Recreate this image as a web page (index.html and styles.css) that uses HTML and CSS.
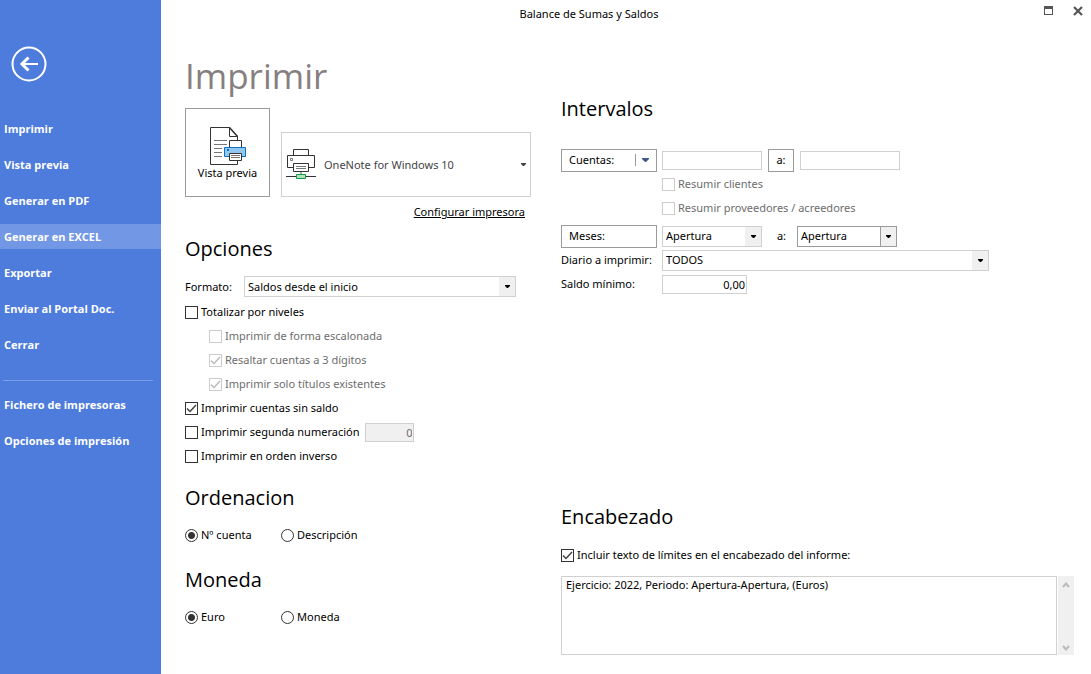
FILE: index.html
```html
<!DOCTYPE html>
<html lang="es">
<head>
<meta charset="utf-8">
<title>Balance de Sumas y Saldos</title>
<link rel="stylesheet" href="styles.css">
</head>
<body>
<div class="app">
  <aside class="sidebar">
    <button class="back" type="button" aria-label="Volver">
      <svg width="36" height="36" viewBox="0 0 36 36" fill="none" stroke="#fff"><circle cx="18" cy="18" r="16.500" stroke-width="2"/><path d="M27 18H11" stroke-width="2"/><path d="M17.500 11.500L11 18l6.500 6.500" stroke-width="3"/></svg>
    </button>
    <nav>
      <ul class="menu">
        <li><a href="#imprimir">Imprimir</a></li>
        <li><a href="#vista">Vista previa</a></li>
        <li><a href="#pdf">Generar en PDF</a></li>
        <li><a class="active" href="#excel">Generar en EXCEL</a></li>
        <li><a href="#exportar">Exportar</a></li>
        <li><a href="#portal">Enviar al Portal Doc.</a></li>
        <li><a href="#cerrar">Cerrar</a></li>
      </ul>
      <ul class="menu secondary">
        <li><a href="#fichero">Fichero de impresoras</a></li>
        <li><a href="#opciones">Opciones de impresión</a></li>
      </ul>
    </nav>
  </aside>

  <div class="window">
    <header class="titlebar">
      <span class="title">Balance de Sumas y Saldos</span>
      <div class="controls">
        <button type="button" aria-label="Maximizar"><svg width="9" height="9" viewBox="0 0 9 9" shape-rendering="crispEdges"><path d="M0 0h9v9H0zM1 3v5h7V3z" fill="#555" fill-rule="evenodd"/></svg></button>
        <button type="button" aria-label="Cerrar ventana"><svg width="10" height="10" viewBox="0 0 10 10"><path d="M1 1l8 8M9 1L1 9" stroke="#555" stroke-width="2.200"/></svg></button>
      </div>
    </header>

    <main class="content">
      <div class="left">
        <h1>Imprimir</h1>
        <div class="print-row">
          <button class="preview" type="button">
            <svg width="36" height="38" viewBox="0 0 36 38" fill="none">
              <path d="M27.500 9.500V37.500H.5V.5H19.500L27.500 9.500H19.500V.5" fill="#fff" stroke="#333"/>
              <path d="M19.500.5l8 9" stroke="#333" stroke-width="1.500"/>
              <path d="M4 13.500h13M4 17.500h13M4 21.500h8M4 25.500h8M4 29.500h8" stroke="#777"/>
              <path d="M19.500 20v-6.500h12V20" fill="#fff" stroke="#333"/>
              <path d="M14.500 20.500h21v9h-21z" fill="#91c8f0" stroke="#0f6fc0"/>
              <path d="M17 22h2v2h-2z" fill="#0f6fc0"/>
              <path d="M19.500 26.500h12v7h-12z" fill="#fff" stroke="#333"/>
              <path d="M21 28.500h9M21 30.500h9" stroke="#777"/>
            </svg>
            <span>Vista previa</span>
          </button>
          <div class="select printer">
            <svg class="printer-icon" width="30" height="31" viewBox="0 0 30 31" fill="none">
              <path d="M7.500 7V.5h15V7" stroke="#333"/>
              <path d="M7.500 18.500h-6v-12h27v12h-6" stroke="#333"/>
              <path d="M4.500 9.500h2v2h-2z" stroke="#777"/>
              <path d="M7.500 14.500h15v8h-15z" fill="#fff" stroke="#333"/>
              <path d="M10 17.500h10M10 19.500h10" stroke="#777"/>
              <path d="M15 23v3" stroke="#aaa" stroke-width="2"/>
              <path d="M0 27.500h30" stroke="#333"/>
              <path d="M10.500 25.500h9v4h-9z" fill="#b3dfb9" stroke="#109a45"/>
            </svg>
            <select aria-label="Impresora"><option>OneNote for Windows 10</option></select>
            <svg class="arrow" width="5" height="3" viewBox="0 0 5 3"><path d="M0 0h5v1L3 3H2L0 1z"/></svg>
          </div>
        </div>
        <a class="configure" href="#configurar">Configurar impresora</a>

        <section>
          <h2>Opciones</h2>
          <div class="format">
            <label for="formato">Formato:</label>
            <div class="select">
              <select id="formato"><option>Saldos desde el inicio</option></select>
              <span class="drop"><svg width="5" height="3" viewBox="0 0 5 3"><path d="M0 0h5v1L3 3H2L0 1z"/></svg></span>
            </div>
          </div>
          <div class="checks">
            <label class="check"><input type="checkbox">Totalizar por niveles</label>
            <label class="check nested"><input type="checkbox" disabled>Imprimir de forma escalonada</label>
            <label class="check nested"><input type="checkbox" checked disabled>Resaltar cuentas a 3 dígitos</label>
            <label class="check nested"><input type="checkbox" checked disabled>Imprimir solo títulos existentes</label>
            <label class="check"><input type="checkbox" checked>Imprimir cuentas sin saldo</label>
            <div class="with-field">
              <label class="check"><input type="checkbox">Imprimir segunda numeración</label>
              <input class="field number" type="text" value="0" aria-label="Número de numeración" disabled>
            </div>
            <label class="check"><input type="checkbox">Imprimir en orden inverso</label>
          </div>
        </section>

        <section>
          <h2>Ordenacion</h2>
          <div class="radios">
            <label class="check"><input type="radio" name="orden" checked>Nº cuenta</label>
            <label class="check"><input type="radio" name="orden">Descripción</label>
          </div>
        </section>

        <section>
          <h2>Moneda</h2>
          <div class="radios">
            <label class="check"><input type="radio" name="moneda" checked>Euro</label>
            <label class="check"><input type="radio" name="moneda">Moneda</label>
          </div>
        </section>
      </div>

      <div class="right">
        <section>
          <h2>Intervalos</h2>
          <div class="ranges">
            <button class="box split" type="button"><span>Cuentas:</span><span class="split-arrow"><svg width="7" height="4" viewBox="0 0 7 4"><path d="M0 0h7v1L4 4H3L0 1z" fill="#3f5a86"/></svg></span></button>
            <div class="pair">
              <input class="field" type="text" aria-label="Cuenta inicial">
              <button class="box to" type="button">a:</button>
              <input class="field" type="text" aria-label="Cuenta final">
            </div>
            <label class="check offset"><input type="checkbox" disabled>Resumir clientes</label>
            <label class="check offset"><input type="checkbox" disabled>Resumir proveedores / acreedores</label>
          </div>
          <div class="ranges">
            <button class="box" type="button">Meses:</button>
            <div class="months">
              <div class="select">
                <select aria-label="Mes inicial"><option>Apertura</option></select>
                <span class="drop"><svg width="5" height="3" viewBox="0 0 5 3"><path d="M0 0h5v1L3 3H2L0 1z"/></svg></span>
              </div>
              <span class="to-text">a:</span>
              <div class="select focused">
                <select aria-label="Mes final"><option>Apertura</option></select>
                <span class="drop"><svg width="5" height="3" viewBox="0 0 5 3"><path d="M0 0h5v1L3 3H2L0 1z"/></svg></span>
              </div>
            </div>
            <label for="diario">Diario a imprimir:</label>
            <div class="select journal">
              <select id="diario"><option>TODOS</option></select>
              <span class="drop"><svg width="5" height="3" viewBox="0 0 5 3"><path d="M0 0h5v1L3 3H2L0 1z"/></svg></span>
            </div>
            <label for="saldo">Saldo mínimo:</label>
            <input class="field amount" id="saldo" type="text" value="0,00">
          </div>
        </section>

        <section class="heading">
          <h2>Encabezado</h2>
          <label class="check"><input type="checkbox" checked>Incluir texto de límites en el encabezado del informe:</label>
          <div class="text">
            <textarea aria-label="Texto del encabezado">Ejercicio: 2022, Periodo: Apertura-Apertura, (Euros)</textarea>
            <div class="scroll">
              <button type="button" aria-label="Subir"><svg width="8" height="6" viewBox="0 0 8 6"><path d="M1 5l3-3.500L7 5" fill="none" stroke="#bbb" stroke-width="2"/></svg></button>
              <button type="button" aria-label="Bajar"><svg width="8" height="6" viewBox="0 0 8 6"><path d="M1 1l3 3.500L7 1" fill="none" stroke="#bbb" stroke-width="2"/></svg></button>
            </div>
          </div>
        </section>
      </div>
    </main>
  </div>
</div>
</body>
</html>
```
FILE: styles.css
```css
* { box-sizing: border-box; }

body {
  margin: 0;
  background: #fff;
  color: #000;
  font: 11px/16px "Noto Sans", "Open Sans", sans-serif;
}

button, input, select, textarea {
  margin: 0;
  padding: 0;
  border: 0;
  border-radius: 0;
  background: none;
  color: inherit;
  font: inherit;
}

svg { display: block; flex: none; }

.app {
  display: grid;
  grid-template-columns: 161px minmax(0, 1fr);
  min-height: 100vh;
}

/* Sidebar */
.sidebar {
  padding-top: 46px;
  background: #4d7cdc;
  color: #fff;
}

.back { display: block; margin: 0 0 34px 11px; }

.menu {
  display: grid;
  gap: 11px;
  margin: 0;
  padding: 0;
  list-style: none;
}

.menu a {
  display: block;
  padding: 0 4px;
  color: #fff;
  font-family: "Open Sans", sans-serif;
  font-weight: 700;
  font-size: 11px;
  line-height: 25px;
  text-decoration: none;
  white-space: nowrap;
}

.menu .active { background: #7297e4; }

.secondary { margin-top: 23px; }

.secondary::before {
  content: "";
  height: 1px;
  margin: 0 8px 0 3px;
  background: #7b9de5;
}

/* Window */
.titlebar { display: flex; height: 28px; }

.title {
  flex: 1;
  line-height: 28px;
  text-align: center;
}

.controls {
  display: flex;
  align-items: flex-start;
  justify-content: flex-end;
  gap: 20px;
  width: 74px;
  padding: 6px 8px 0 0;
}

.content {
  display: grid;
  grid-template-columns: minmax(0, 346px) minmax(0, 1fr);
  gap: 30px;
  padding: 24px 17px 19px 24px;
}

h1, h2 { margin: 0; font-family: "Open Sans", sans-serif; font-weight: 400; }

h1 {
  margin-bottom: 8px;
  color: #85807f;
  font-size: 35px;
  line-height: 48px;
}

h2 { font-size: 20px; line-height: 34px; }

.left { display: flex; flex-direction: column; }
.left section { margin-top: 13px; }
.left .configure + section { margin-top: 12px; }

.print-row { display: flex; align-items: flex-end; gap: 11px; }

.preview {
  display: flex;
  flex-direction: column;
  align-items: center;
  width: 85px;
  height: 89px;
  padding-top: 18px;
  border: 1px solid #9b9b9b;
}

/* Drop-downs */
.select { position: relative; height: 21px; }

.select select {
  display: block;
  width: 100%;
  height: 100%;
  padding: 0 20px 0 3px;
  border: 1px solid #d0d0d0;
  appearance: none;
}

.drop {
  position: absolute;
  top: 1px;
  right: 1px;
  bottom: 1px;
  display: grid;
  place-items: center;
  width: 16px;
  background: #f0f0f0;
  pointer-events: none;
}

.focused select { border-color: #9b9b9b; }
.focused .drop { border-left: 1px solid #9b9b9b; }

.printer { flex: 1; height: 65px; }

.printer select {
  padding-left: 42px;
  color: #444;
}

.printer-icon { position: absolute; top: 17px; left: 5px; }
.printer .arrow { position: absolute; top: 31px; right: 5px; fill: #444; }

.configure {
  align-self: flex-end;
  margin: 7px 6px 0 0;
  color: #000;
}

.format {
  display: grid;
  grid-template-columns: 59px minmax(0, 272px);
  align-items: center;
  margin: 10px 0 3px;
}

/* Check boxes and radios */
.check {
  display: flex;
  align-items: center;
  gap: 3px;
  height: 24px;
  white-space: nowrap;
}

.check input {
  flex: none;
  width: 13px;
  height: 13px;
  border: 1px solid #333;
  background: #fff center / 11px 11px no-repeat;
  appearance: none;
}

.check input:disabled { border-color: #ccc; }
.check:has(input:disabled) { color: #6d6d6d; }

.check input[type="checkbox"]:checked {
  background-image: url("data:image/svg+xml,%3Csvg xmlns='http://www.w3.org/2000/svg' viewBox='0 0 11 11'%3E%3Cpath d='M1 5.500l3 3 6-6.500' fill='none' stroke='%23444' stroke-width='1.500'/%3E%3C/svg%3E");
}

.check input[type="checkbox"]:checked:disabled {
  background-image: url("data:image/svg+xml,%3Csvg xmlns='http://www.w3.org/2000/svg' viewBox='0 0 11 11'%3E%3Cpath d='M1 5.500l3 3 6-6.500' fill='none' stroke='%23bbb' stroke-width='1.500'/%3E%3C/svg%3E");
}

.check input[type="radio"] { border-radius: 50%; }

.check input[type="radio"]:checked {
  background: radial-gradient(circle, #333 3px, #fff 4px);
}

.nested { padding-left: 24px; }
.with-field { display: flex; align-items: center; gap: 6px; }

.radios {
  display: grid;
  grid-template-columns: 96px 1fr;
  margin: 8px 0 3px;
}

/* Fields */
.field {
  width: 100px;
  height: 19px;
  padding: 0 1px;
  border: 1px solid #d0d0d0;
}

.number {
  width: 49px;
  background: #f0f0f0;
  color: #6d6d6d;
  text-align: right;
}

.amount { width: 85px; text-align: right; }

.box {
  height: 23px;
  padding: 0 7px;
  border: 1px solid #9b9b9b;
  text-align: left;
}

.right { padding-top: 40px; }

.ranges {
  display: grid;
  grid-template-columns: 96px minmax(0, 1fr);
  grid-auto-rows: 24px;
  column-gap: 5px;
  align-items: center;
}

h2 + .ranges { margin-top: 22px; }
.ranges + .ranges { margin-top: 4px; }
.ranges > label { white-space: nowrap; }
.offset { grid-column: 2; }

.split { display: flex; align-items: center; justify-content: space-between; }
.split-arrow { padding: 4px 0 4px 6px; border-left: 1px solid #9b9b9b; }

.pair { display: flex; align-items: center; gap: 6px; }
.to { width: 26px; padding: 0; text-align: center; }

.months {
  display: grid;
  grid-template-columns: 100px 35px 100px;
  align-items: center;
}

.to-text { padding-left: 4px; text-align: center; }
.journal { max-width: 327px; }

.heading { margin-top: 204px; }
.heading .check { margin-top: 9px; }

.text { display: flex; gap: 1px; height: 79px; margin-top: 9px; }

.text textarea {
  flex: 1;
  min-width: 0;
  padding: 0 4px;
  border: 1px solid #d0d0d0;
  overflow: hidden;
  resize: none;
}

.scroll {
  display: flex;
  flex-direction: column;
  justify-content: space-between;
  align-items: center;
  width: 16px;
  padding: 6px 0 4px;
  background: #f0f0f0;
}
```
